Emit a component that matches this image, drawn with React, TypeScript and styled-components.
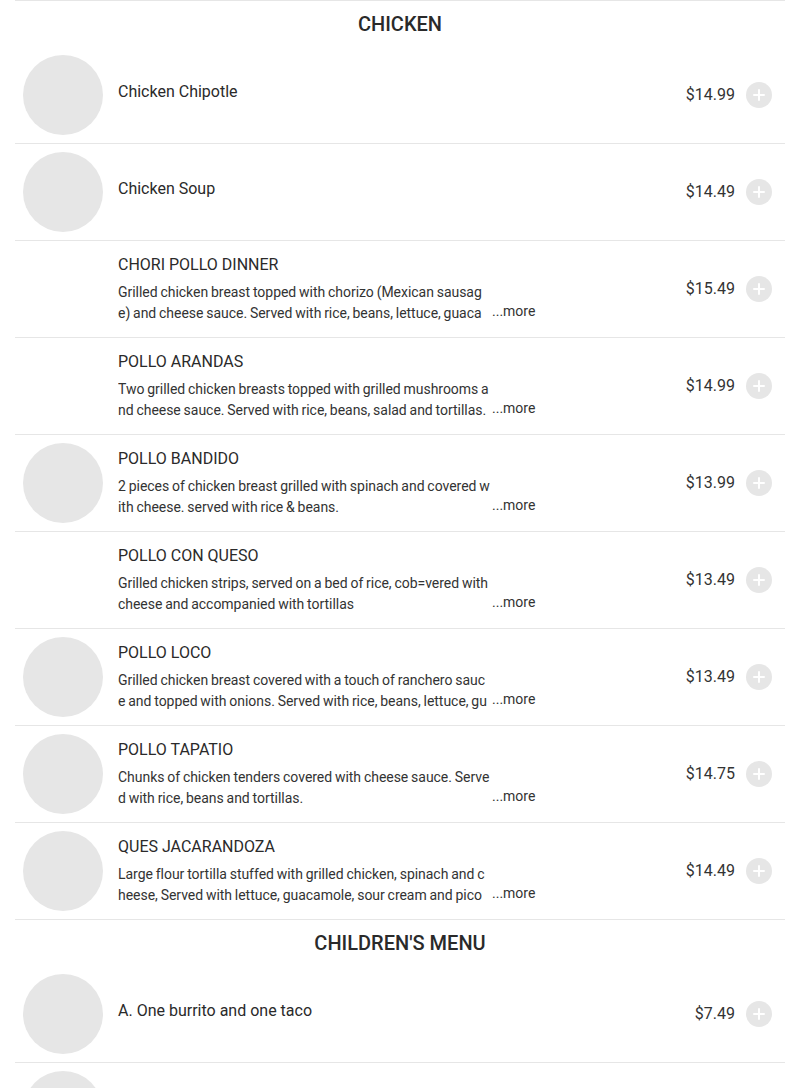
import styled, { createGlobalStyle } from "styled-components";

const GlobalStyle = createGlobalStyle`
  body {
    margin: 0;
    background: #ffffff;
    font-family: Roboto, "Liberation Sans", Arial, sans-serif;
    color: #222;
  }
`;

type Item = {
  name: string;
  price: string;
  desc?: string;
  image?: boolean;
};

type Section = {
  title: string;
  items: Item[];
};

const sections: Section[] = [
  {
    title: "CHICKEN",
    items: [
      { name: "Chicken Chipotle", price: "$14.99", image: true },
      { name: "Chicken Soup", price: "$14.49", image: true },
      {
        name: "CHORI POLLO DINNER",
        price: "$15.49",
        desc: "Grilled chicken breast topped with chorizo (Mexican sausage) and cheese sauce. Served with rice, beans, lettuce, guacamole, sour cream and tortillas.",
      },
      {
        name: "POLLO ARANDAS",
        price: "$14.99",
        desc: "Two grilled chicken breasts topped with grilled mushrooms and cheese sauce. Served with rice, beans, salad and tortillas.",
      },
      {
        name: "POLLO BANDIDO",
        price: "$13.99",
        image: true,
        desc: "2 pieces of chicken breast grilled with spinach and covered with cheese. served with rice & beans.",
      },
      {
        name: "POLLO CON QUESO",
        price: "$13.49",
        desc: "Grilled chicken strips, served on a bed of rice, cob=vered with cheese and accompanied with tortillas",
      },
      {
        name: "POLLO LOCO",
        price: "$13.49",
        image: true,
        desc: "Grilled chicken breast covered with a touch of ranchero sauce and topped with onions. Served with rice, beans, lettuce, guacamole and tortillas.",
      },
      {
        name: "POLLO TAPATIO",
        price: "$14.75",
        image: true,
        desc: "Chunks of chicken tenders covered with cheese sauce. Served with rice, beans and tortillas.",
      },
      {
        name: "QUES JACARANDOZA",
        price: "$14.49",
        image: true,
        desc: "Large flour tortilla stuffed with grilled chicken, spinach and cheese, Served with lettuce, guacamole, sour cream and pico de gallo.",
      },
    ],
  },
  {
    title: "CHILDREN'S MENU",
    items: [
      { name: "A. One burrito and one taco", price: "$7.49", image: true },
      { name: "B. One enchilada and one taco", price: "$7.49", image: true },
    ],
  },
];

function PlusIcon() {
  return (
    <svg width="12" height="12" viewBox="0 0 12 12" aria-hidden="true">
      <path d="M6 1v10M1 6h10" stroke="#fff" strokeWidth="2" strokeLinecap="round" />
    </svg>
  );
}

function App() {
  return (
    <>
      <GlobalStyle />
      <Menu>
        {sections.map((section) => (
          <div key={section.title}>
            <SectionTitle>{section.title}</SectionTitle>
            {section.items.map((item) => (
              <Row key={item.name}>
                <Thumb $empty={!item.image} />
                <Info>
                  <Name $alone={!item.desc}>{item.name}</Name>
                  {item.desc && (
                    <DescRow>
                      <Desc>{item.desc}</Desc>
                      <More>...more</More>
                    </DescRow>
                  )}
                </Info>
                <Price>{item.price}</Price>
                <AddButton aria-label="add">
                  <PlusIcon />
                </AddButton>
              </Row>
            ))}
          </div>
        ))}
      </Menu>
    </>
  );
}

const Menu = styled.div`
  margin: 0 15px;
  border-top: 1px solid #e6e6e6;
`;

const SectionTitle = styled.h2`
  margin: 0;
  height: 46px;
  line-height: 46px;
  text-align: center;
  font-size: 20px;
  font-weight: 500;
  color: #2a2a2a;
`;

const Row = styled.div`
  display: flex;
  align-items: center;
  height: 96px;
  padding: 0 13px 0 8px;
  border-bottom: 1px solid #e6e6e6;
`;

const Thumb = styled.div<{ $empty: boolean }>`
  flex: none;
  width: 80px;
  height: 80px;
  border-radius: 50%;
  background: ${(p) => (p.$empty ? "transparent" : "#e6e6e6")};
  margin-right: 15px;
`;

const Info = styled.div`
  display: flex;
  flex-direction: column;
  padding-top: 1px;
`;

const Name = styled.div<{ $alone: boolean }>`
  font-size: 16px;
  line-height: 18px;
  color: #2a2a2a;
  margin-bottom: ${(p) => (p.$alone ? "8px" : "8px")};
`;

const DescRow = styled.div`
  display: flex;
  align-items: flex-end;
`;

const Desc = styled.div`
  width: 374px;
  height: 42px;
  overflow: hidden;
  font-size: 14px;
  line-height: 21px;
  letter-spacing: -0.03px;
  word-spacing: -0.6px;
  color: #333;
  word-break: break-all;
`;

const More = styled.span`
  font-size: 14px;
  line-height: 21px;
  color: #333;
  margin-bottom: 2px;
`;

const Price = styled.div`
  margin-left: auto;
  font-size: 16px;
  line-height: 18px;
  color: #333;
`;

const AddButton = styled.button`
  flex: none;
  width: 26px;
  height: 26px;
  margin-left: 11px;
  border: none;
  border-radius: 50%;
  background: #e6e6e6;
  display: flex;
  align-items: center;
  justify-content: center;
  padding: 0;
  cursor: pointer;
`;

export default App;
